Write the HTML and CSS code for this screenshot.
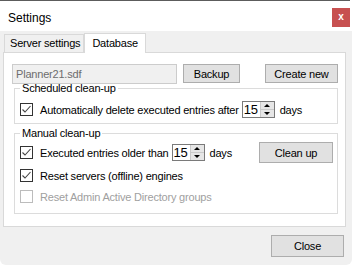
FILE: index.html
```html
<!DOCTYPE html>
<html lang="en">
  <head>
    <meta charset="UTF-8" />
    <title>Settings</title>
    <link rel="stylesheet" href="styles.css">
  </head>
  <body>
    <div class="window">
      <div class="titlebar">
        <span class="title">Settings</span>
        <span class="close">x</span>
      </div>

      <div class="main">
        <div class="tabs">
          <div class="tab">Server settings</div>
          <div class="tab active">Database</div>
        </div>

        <div class="panel">
          <div class="db-row">
            <div class="textbox">Planner21.sdf</div>
            <button class="btn btn-backup">Backup</button>
            <button class="btn btn-create">Create new</button>
          </div>

          <fieldset class="group group-sched">
            <legend>Scheduled clean-up</legend>
            <div class="row">
              <span class="check on"><svg width="11" height="11" viewBox="0 0 11 11"><path d="M1.5 5.5 L4 8 L9.5 2" /></svg></span>
              <span class="label">Automatically delete executed entries after</span>
              <span class="spin">
                <span class="spin-val">15</span>
                <span class="spin-btns"><span class="up"></span><span class="down"></span></span>
              </span>
              <span class="unit">days</span>
            </div>
          </fieldset>

          <fieldset class="group group-manual">
            <legend>Manual clean-up</legend>
            <div class="row row-first">
              <span class="check on"><svg width="11" height="11" viewBox="0 0 11 11"><path d="M1.5 5.5 L4 8 L9.5 2" /></svg></span>
              <span class="label">Executed entries older than</span>
              <span class="spin">
                <span class="spin-val">15</span>
                <span class="spin-btns"><span class="up"></span><span class="down"></span></span>
              </span>
              <span class="unit">days</span>
              <button class="btn btn-clean">Clean up</button>
            </div>
            <div class="row">
              <span class="check on"><svg width="11" height="11" viewBox="0 0 11 11"><path d="M1.5 5.5 L4 8 L9.5 2" /></svg></span>
              <span class="label">Reset servers (offline) engines</span>
            </div>
            <div class="row disabled">
              <span class="check"></span>
              <span class="label">Reset Admin Active Directory groups</span>
            </div>
          </fieldset>
        </div>

        <div class="footer">
          <button class="btn btn-close">Close</button>
        </div>
      </div>
    </div>
  </body>
</html>
```

FILE: styles.css
```css
body,
html {
  margin: 0;
  padding: 0;
  background-color: #fff;
}

.window {
  width: 352px;
  height: 265px;
  display: flex;
  flex-direction: column;
  font-family: "Liberation Sans", Arial, sans-serif;
  font-size: 11px;
  letter-spacing: -0.2px;
  color: #000;
  white-space: nowrap;
}

.titlebar {
  height: 30px;
  border-top: 1px solid #5c5c5c;
  margin-right: 2px;
  background-color: #fff;
  display: flex;
  align-items: flex-start;
  justify-content: space-between;
  padding-left: 8px;
}

.title {
  font-size: 12px;
  letter-spacing: 0;
  margin-top: 10px;
}

.close {
  width: 18px;
  height: 19px;
  margin-top: 7px;
  background-color: #c75050;
  color: #fff;
  font-weight: bold;
  font-size: 10px;
  line-height: 17px;
  text-align: center;
}

.main {
  flex: 1;
  background-color: #f0f0f0;
  padding: 1px 6px 0 3px;
  border-radius: 0 0 6px 6px;
}

/* tabs */
.tabs {
  display: flex;
  align-items: flex-end;
  height: 20px;
  padding-left: 1px;
  position: relative;
  z-index: 1;
}

.tab {
  height: 17px;
  line-height: 17px;
  padding: 0 3px 0 5px;
  border: 1px solid #d9d9d9;
  border-bottom: none;
  background-color: #f0f0f0;
}

.tab.active {
  height: 19px;
  line-height: 18px;
  margin-bottom: -1px;
  padding: 0 7px 0 7px;
  background-color: #fff;
}

.panel {
  background-color: #fff;
  border: 1px solid #d9d9d9;
  padding: 11px 0 0 8px;
  box-sizing: border-box;
  height: 175px;
}

.db-row {
  display: flex;
  align-items: flex-start;
  height: 20px;
}

.textbox {
  width: 165px;
  height: 20px;
  box-sizing: border-box;
  border: 1px solid #cccccc;
  background-color: #f0f0f0;
  color: #6d6d6d;
  padding-left: 3px;
  line-height: 18px;
}

.btn {
  font-family: inherit;
  font-size: 11px;
  letter-spacing: inherit;
  color: #000;
  background-color: #e1e1e1;
  border: 1px solid #adadad;
  padding: 0;
  box-sizing: border-box;
  border-radius: 0;
}

.btn-backup {
  width: 57px;
  height: 19px;
  margin-left: 6px;
}

.btn-create {
  width: 73px;
  height: 19px;
  margin-left: 25px;
}

/* group boxes */
.group {
  width: 324px;
  box-sizing: border-box;
  margin: -3px 0 0 2px;
  padding: 0 4px 5px 5px;
  border: 1px solid #dcdcdc;
  min-width: 0;
}

.group legend {
  padding: 0 2px;
  line-height: 14px;
}

.group-sched {
  padding-top: 6px;
}

.group-manual {
  margin-top: 2px;
  padding-top: 2px;
  padding-bottom: 6px;
}

.row {
  display: flex;
  align-items: center;
  height: 17px;
}

.group-manual .row {
  height: 21px;
}

.group-manual .row-first {
  margin-bottom: 2px;
}

.check {
  width: 13px;
  height: 13px;
  box-sizing: border-box;
  border: 1px solid #333;
  background-color: #fff;
  margin-right: 7px;
  display: flex;
  align-items: center;
  justify-content: center;
}

.check svg path {
  fill: none;
  stroke: #444;
  stroke-width: 1.1;
}

.disabled .check {
  border-color: #bcbcbc;
}

.disabled .label {
  color: #a0a0a0;
}

.spin {
  display: flex;
  width: 33px;
  height: 17px;
  box-sizing: border-box;
  border: 1px solid #7a7a7a;
  background-color: #fff;
  margin-left: 3px;
}

.spin-val {
  flex: 1;
  font-size: 13px;
  line-height: 15px;
  padding-left: 1px;
}

.spin-btns {
  width: 13px;
  display: flex;
  flex-direction: column;
  background-color: #e6e6e6;
  border-left: 1px solid #c9c9c9;
}

.spin-btns span {
  flex: 1;
  display: flex;
  align-items: center;
  justify-content: center;
}

.spin-btns .up {
  border-bottom: 1px solid #c9c9c9;
}

.spin-btns .up::after {
  content: "";
  border-left: 3px solid transparent;
  border-right: 3px solid transparent;
  border-bottom: 3px solid #000;
}

.spin-btns .down::after {
  content: "";
  border-left: 3px solid transparent;
  border-right: 3px solid transparent;
  border-top: 3px solid #000;
}

.unit {
  margin-left: 5px;
}

.btn-clean {
  width: 74px;
  height: 21px;
  margin-left: auto;
}

.footer {
  display: flex;
  justify-content: flex-end;
  padding: 8px 2px 0 0;
}

.btn-close {
  width: 73px;
  height: 22px;
}
```
